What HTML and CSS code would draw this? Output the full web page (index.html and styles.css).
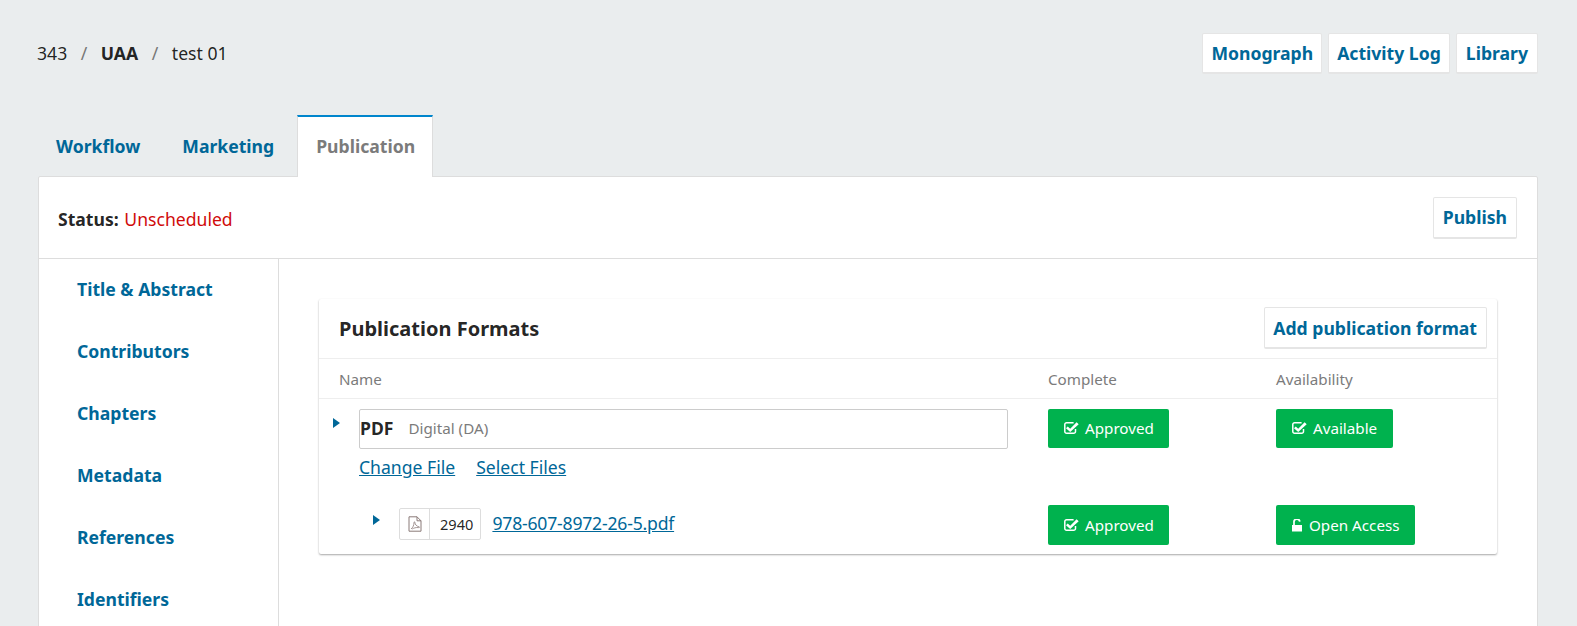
FILE: index.html
```html
<!DOCTYPE html>
<html lang="en">
<head>
<meta charset="utf-8">
<title>test 01</title>
<link rel="stylesheet" href="styles.css">
</head>
<body>
<svg class="defs" width="0" height="0" aria-hidden="true">
  <symbol id="check" viewBox="0 0 15 13">
    <path d="M11.500 8v2.400a1.800 1.800 0 0 1-1.800 1.800H2.600A1.800 1.800 0 0 1 .8 10.400V3.600a1.800 1.800 0 0 1 1.800-1.800h7" fill="none" stroke="currentColor" stroke-width="1.500"/>
    <path d="M3.700 5.400 6.200 7.700 12.600 1.300 14.700 3.300 6.200 11 2 7.200z" fill="currentColor"/>
  </symbol>
</svg>
<header class="top">
  <ol class="crumbs">
    <li>343</li>
    <li class="sep">/</li>
    <li class="strong">UAA</li>
    <li class="sep">/</li>
    <li>test 01</li>
  </ol>
  <div class="actions">
    <a class="btn">Monograph</a>
    <a class="btn">Activity Log</a>
    <a class="btn">Library</a>
  </div>
</header>
<nav class="tabs">
  <a class="tab">Workflow</a>
  <a class="tab">Marketing</a>
  <a class="tab active">Publication</a>
</nav>
<main class="panel">
  <div class="status">
    <div class="status-text"><b>Status:</b> <span class="red">Unscheduled</span></div>
    <a class="btn publish">Publish</a>
  </div>
  <div class="body">
    <aside class="side">
      <a>Title &amp; Abstract</a>
      <a>Contributors</a>
      <a>Chapters</a>
      <a>Metadata</a>
      <a>References</a>
      <a>Identifiers</a>
    </aside>
    <section class="content">
      <div class="card">
        <div class="card-head">
          <h2>Publication Formats</h2>
          <a class="btn add">Add publication format</a>
        </div>
        <div class="row cols">
          <div class="c-name">Name</div>
          <div class="c-complete">Complete</div>
          <div class="c-avail">Availability</div>
        </div>
        <div class="row format">
          <div class="c-name">
            <div class="fmt-line">
              <span class="arrow"></span>
              <div class="fmt-box"><b>PDF</b><span>Digital (DA)</span></div>
            </div>
            <div class="fmt-links"><a>Change File</a><a>Select Files</a></div>
          </div>
          <div class="c-complete"><span class="pill"><svg class="ico"><use href="#check"/></svg>Approved</span></div>
          <div class="c-avail"><span class="pill"><svg class="ico"><use href="#check"/></svg>Available</span></div>
        </div>
        <div class="row file">
          <div class="c-name file-name">
            <span class="arrow"></span>
            <span class="chip">
              <span class="chip-ico">
                <svg width="14" height="16" viewBox="0 0 14 16" fill="none" stroke="#8a7a78" stroke-width="1">
                  <path d="M1 .8h8l4 4v10.400H1z"/>
                  <path d="M9 .8v4h4"/>
                  <path d="M3 13c2-1.400 3-4 3-6.500 0-1 .9-.9.9 0 0 2 1.800 3.800 4 4.200 1 .2.700 1-.2.900-2.800-.3-5 .4-6.500 1.400" stroke-width=".8"/>
                </svg>
              </span>
              <span class="chip-id">2940</span>
            </span>
            <a class="file-link">978-607-8972-26-5.pdf</a>
          </div>
          <div class="c-complete"><span class="pill tall"><svg class="ico"><use href="#check"/></svg>Approved</span></div>
          <div class="c-avail">
            <span class="pill tall open">
              <svg class="lock" width="10" height="13" viewBox="0 0 10 13"><path d="M0 6h10v6.500H0z" fill="#fff"/><path d="M2 6V3.500a2.900 2.900 0 0 1 5.800-.8" fill="none" stroke="#fff" stroke-width="1.700"/></svg>Open Access
            </span>
          </div>
        </div>
      </div>
    </section>
  </div>
</main>
</body>
</html>
```
FILE: styles.css
```css
* { box-sizing: border-box; }
html, body { margin: 0; height: 626px; overflow: hidden; }
body {
  background: #eaedee;
  font-family: "Noto Sans", sans-serif;
  font-size: 17.6px;
  line-height: 24px;
  color: rgba(0, 0, 0, .87);
}
.defs { position: absolute; }
a { color: #006798; }

.top {
  display: flex;
  justify-content: space-between;
  align-items: center;
  height: 40px;
  margin: 33px 39px 0 37px;
}
.crumbs { display: flex; list-style: none; margin: 0; padding: 0; }
.crumbs .sep { margin: 0 13.5px; color: #777; }
.crumbs .strong { font-weight: 700; }
.actions { display: flex; gap: 6px; }

.btn {
  display: inline-flex;
  align-items: center;
  font-weight: 700;
  background: #fff;
  border: 1px solid rgba(0, 0, 0, .1);
  border-bottom-width: 2px;
  border-radius: 2px;
  padding: 0 9px;
  height: 41px;
}
.actions .btn { padding: 0 8px; }
.actions .btn:last-child { padding: 0 9px; }

.tabs { display: flex; height: 61px; margin: 42px 0 0 38px; }
.tab {
  font-weight: 700;
  padding: 19px 18px 0;
  margin-right: 6px;
}
.tab.active {
  background: #fff;
  color: #7b7b7b;
  border: 1px solid #ddd;
  border-top: 2px solid #0085cc;
  border-bottom: 0;
  padding: 17px 17px 0 18px;
  margin: 0 0 0 -1px;
  position: relative;
  z-index: 1;
  height: 62px;
}

.panel {
  margin: 0 39px 0 38px;
  background: #fff;
  border: 1px solid #ddd;
  border-radius: 2px;
  height: 460px;
}
.status {
  display: flex;
  justify-content: space-between;
  align-items: center;
  height: 82px;
  padding: 0 20px 0 19px;
  border-bottom: 1px solid #ddd;
}
.status-text { margin-top: 2px; }
.red { color: #d00a0a; margin-left: 1px; }
.publish { height: 42px; }

.body { display: flex; }
.side {
  width: 240px;
  border-right: 1px solid #ddd;
  padding: 0 0 0 38px;
  display: flex;
  flex-direction: column;
  flex: none;
  height: 376px;
  overflow: hidden;
}
.side a { font-weight: 700; height: 62px; padding-top: 18px; display: block; flex: none; }

.content { flex: 1; padding: 40px 40px 0 40px; }
.card {
  height: 255px;
  border-radius: 2px;
  box-shadow: 0 1px 2px rgba(0, 0, 0, .35);
}
.card-head {
  display: flex;
  justify-content: space-between;
  align-items: center;
  height: 60px;
  padding: 0 10px 0 20px;
  border-bottom: 1px solid #eee;
}
h2 { margin: 0; font-size: 20px; font-weight: 700; }
.add { height: 42px; padding: 0 9px 0 8px; margin-bottom: 1px; }

.row { display: flex; }
.c-name { width: 729px; flex: none; padding-left: 20px; }
.c-complete { width: 228px; flex: none; }
.c-avail { flex: 1; }

.cols {
  height: 40px;
  padding-top: 1px;
  align-items: center;
  font-size: 15.2px;
  color: #7b7b7b;
  border-bottom: 1px solid #eee;
}
.format { padding-top: 10px; height: 106px; }
.format .c-name { padding-left: 14px; }
.fmt-line { display: flex; align-items: flex-start; gap: 19px; }
.arrow {
  display: block;
  flex: none;
  width: 0;
  height: 0;
  margin-top: 9px;
  border-left: 7px solid #006798;
  border-top: 5px solid transparent;
  border-bottom: 5px solid transparent;
}
.fmt-box {
  width: 649px;
  height: 40px;
  padding-bottom: 2px;
  border: 1px solid #ccc;
  border-radius: 2px;
  display: flex;
  align-items: center;
  flex: none;
}
.fmt-box b { margin-right: 15px; }
.fmt-box span { font-size: 15.2px; color: #7b7b7b; }
.fmt-links { display: flex; gap: 21px; margin: 6px 0 0 26px; }
.fmt-links a, .file-link { text-decoration: underline; }

.pill {
  display: inline-flex;
  align-items: center;
  height: 39px;
  padding: 0 15.5px 1px 16px;
  background: #00b24e;
  color: #fff;
  font-size: 15.2px;
  border-radius: 2px;
}
.pill.tall { height: 40px; padding-bottom: 0; }
.ico { width: 15px; height: 13px; margin-right: 6px; margin-top: -1px; color: #fff; }
.lock { margin-right: 7px; }

.file { height: 48px; }
.file-name { display: flex; align-items: flex-start; padding-left: 54px; }
.file .arrow { margin-top: 10px; margin-right: 19px; }
.chip {
  display: inline-flex;
  height: 32px;
  margin-top: 3px;
  border: 1px solid #ddd;
  border-radius: 2px;
  font-size: 14.6px;
  line-height: 30px;
}
.chip-ico {
  width: 30px;
  border-right: 1px solid #ddd;
  display: flex;
  align-items: center;
  justify-content: center;
}
.chip-id { padding: 0 7px 0 10px; }
.file-link { margin-left: 11px; margin-top: 6px; letter-spacing: -.2px; }
```
